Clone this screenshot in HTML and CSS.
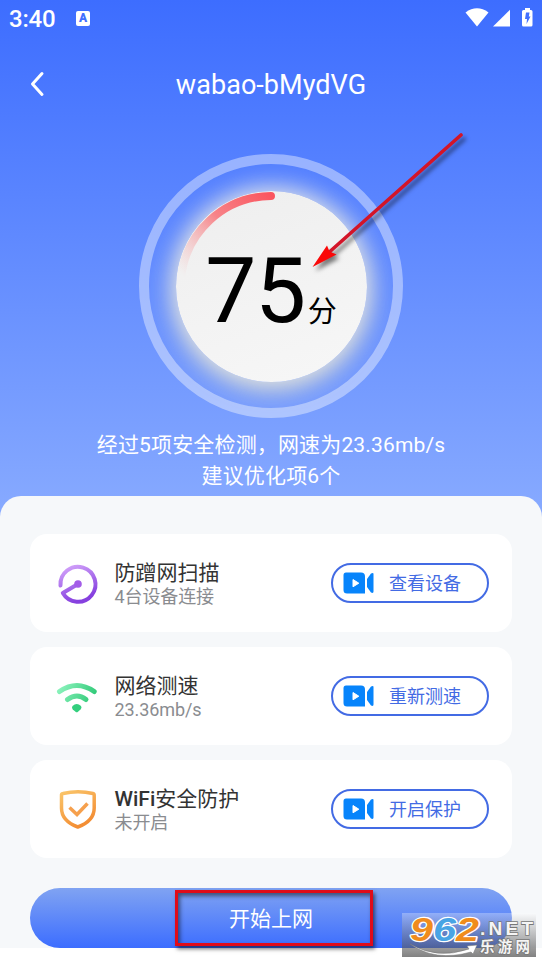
FILE: index.html
```html
<!DOCTYPE html>
<html lang="zh-CN">
<head>
<meta charset="utf-8">
<title>WiFi</title>
<link rel="stylesheet" href="styles.css">
</head>
<body>
<svg class="defs" width="0" height="0">
  <defs>
    <symbol id="video" viewBox="0 0 31 22">
      <path fill="#0784fb" d="M3 .5H18Q22 .5 22 4.5V21.500H4Q.5 21.500 .5 18V3Q.5.5 3 .5Z"/>
      <path fill="#0784fb" d="M24 7 28 1.500Q30.500.3 30.500 2V19.500Q30.500 21.700 28 20.500L24 15Z"/>
      <path fill="#fff" stroke="#fff" stroke-linejoin="round" d="M10 7.500V14.800L15.800 11.200Z"/>
    </symbol>
  </defs>
</svg>
<div class="app">
  <header class="status">
    <span class="clock">3:40</span>
    <span class="badge">A</span>
    <svg class="signals" width="70" height="20" viewBox="0 0 70 20" fill="#fff">
      <path d="M.5 4.500Q12 -3.800 23.500 4.500L12 18.500Z"/>
      <path d="M28 18.500 45 1.700V18.500Z"/>
      <path d="M57 2H60V0H65V2H66Q67.500 2 67.500 3.500V17Q67.500 18.500 66 18.500H58.500Q57 18.500 57 17V3.500Q57 2 58.500 2Z"/>
      <path fill="#416fff" d="M61 4.500H64.500L63.800 8.500H65.500L61.500 16 62 11H60Z"/>
    </svg>
  </header>
  <nav class="nav">
    <svg class="back" width="16" height="26" viewBox="0 0 16 26"><path d="M13 2.500 3.500 13 13 23.500" fill="none" stroke="#fff" stroke-width="3" stroke-linecap="round" stroke-linejoin="round"/></svg>
    <h1 class="title">wabao-bMydVG</h1>
  </nav>
  <section class="gauge">
    <div class="disc">
      <svg class="arc" width="192" height="192" viewBox="0 0 192 192">
        <defs><linearGradient id="red" gradientUnits="userSpaceOnUse" x1="96" y1="5" x2="10" y2="88"><stop offset="0" stop-color="#fa555f"/><stop offset=".45" stop-color="#f78388"/><stop offset="1" stop-color="#f5b7b8" stop-opacity="0"/></linearGradient></defs>
        <path d="M95 5A91 91 0 0 0 5 88" fill="none" stroke="url(#red)" stroke-width="8" stroke-linecap="round"/>
      </svg>
      <div class="score"><span class="num">75</span><span class="unit">分</span></div>
    </div>
    <svg class="pointer" width="170" height="150" viewBox="0 0 170 150">
      <path d="M156 11 21 131" stroke="#d31528" stroke-width="3.600" stroke-linecap="round"/>
      <path fill="#fa0808" d="M7.500 143 22 121.500 24.500 127.500 31.500 130.500Z"/>
    </svg>
  </section>
  <p class="summary">经过5项安全检测，网速为23.36mb/s<br>建议优化项6个</p>
  <main class="sheet">
    <article class="card">
      <svg class="icon" width="44" height="44" viewBox="0 0 44 44"><defs><linearGradient id="purple" x1="0" y1="0" x2=".4" y2="1"><stop stop-color="#d5a6fb"/><stop offset="1" stop-color="#8640df"/></linearGradient></defs>
        <path d="M4.500 23.500A17.500 17.500 0 1 1 6.800 31L22 22" fill="none" stroke="url(#purple)" stroke-width="4" stroke-linecap="round" stroke-linejoin="round"/><circle cx="22" cy="22" r="3.800" fill="#a35ce8"/></svg>
      <div class="text"><h2>防蹭网扫描</h2><p>4台设备连接</p></div>
      <button class="pill"><svg width="31" height="22"><use href="#video"/></svg><span>查看设备</span></button>
    </article>
    <article class="card">
      <svg class="icon" width="44" height="44" viewBox="0 0 44 44"><defs><linearGradient id="green" gradientUnits="userSpaceOnUse" x1="3" y1="12" x2="36" y2="30"><stop stop-color="#8cf3bd"/><stop offset="1" stop-color="#2dc875"/></linearGradient></defs>
        <g fill="none" stroke="url(#green)" stroke-width="5" stroke-linecap="round"><path d="M3.500 16.500Q21 4.500 38.200 16.500"/><path d="M11.500 24.500Q21 17.500 30 24.500"/></g><path fill="#33cf7d" d="M16.500 31Q20.800 27 25 31 26.300 32.500 24.500 34.500L22 36.800Q20.800 37.800 19.500 36.800L16.800 34.500Q15.300 32.500 16.500 31Z"/></svg>
      <div class="text"><h2>网络测速</h2><p>23.36mb/s</p></div>
      <button class="pill"><svg width="31" height="22"><use href="#video"/></svg><span>重新测速</span></button>
    </article>
    <article class="card">
      <svg class="icon" width="44" height="44" viewBox="0 0 44 44"><defs><linearGradient id="orange" x1="0" y1="0" x2=".5" y2="1"><stop stop-color="#fac56a"/><stop offset="1" stop-color="#f38e34"/></linearGradient></defs>
        <path d="M7 5.500Q22 2 37 5.500Q38.300 5.800 38.200 7.500V20Q38.200 33 21.800 39Q5.500 33 5.500 20V7.500Q5.300 5.800 7 5.500Z" fill="none" stroke="url(#orange)" stroke-width="3.500" stroke-linejoin="round"/><path d="M13.500 19.500 21 26.500 31.500 15.500" fill="none" stroke="#f6a04d" stroke-width="3.500"/></svg>
      <div class="text"><h2><b>WiFi</b>安全防护</h2><p>未开启</p></div>
      <button class="pill"><svg width="31" height="22"><use href="#video"/></svg><span>开启保护</span></button>
    </article>
    <button class="start">开始上网</button>
  </main>
</div>
<div class="highlight"></div>
<div class="mark">
  <svg width="134" height="44" viewBox="0 0 134 44">
    <g font-family="Liberation Sans" font-weight="bold" font-style="italic" font-size="34" stroke="#fff" stroke-width="2.500" paint-order="stroke" stroke-linejoin="round">
      <text x="8" y="28" textLength="23" lengthAdjust="spacingAndGlyphs" fill="#f08c1d">9</text>
      <text x="31" y="28" textLength="23" lengthAdjust="spacingAndGlyphs" fill="#48a4e4">6</text>
      <text x="54" y="28" textLength="23" lengthAdjust="spacingAndGlyphs" fill="#f08c1d">2</text>
    </g>
    <path d="M8 31Q35 47 67 36L65 33 75 32 71 41 69 39Q33 49 8 31Z" fill="#fff" stroke="#777" stroke-width=".5"/>
    <g fill="#f5f5f5" stroke="#777" stroke-width="1.600" paint-order="stroke" font-weight="bold">
      <text x="78" y="21.500" font-family="Liberation Sans" font-size="19" textLength="53">.NET</text>
      <text x="78" y="39" font-family="Noto Sans CJK SC" font-size="14.500" textLength="50">乐游网</text>
    </g>
  </svg>
</div>
</body>
</html>
```
FILE: styles.css
```css
* { box-sizing: border-box; margin: 0; padding: 0; }
body { position: relative; width: 542px; height: 963px; overflow: hidden; background: #fff; font-family: Roboto, "Noto Sans CJK SC", sans-serif; color: #fff; }
svg { display: block; flex: none; overflow: visible; }
.defs { position: absolute; }
.app { height: 948px; display: flex; flex-direction: column; background: linear-gradient(#3d6dff 0, #86a9ff 505px); }
.status { height: 38px; flex: none; display: flex; align-items: center; padding: 0 7px 2px 9px; }
.clock { font-size: 24px; font-weight: 500; line-height: 28px; letter-spacing: -.2px; width: 67px; padding-top: 2px; }
.badge { width: 14px; height: 15px; border-radius: 2px; background: #fff; color: #416fff; font-size: 12px; font-weight: 900; line-height: 15px; text-align: center; }
.signals { margin-left: auto; }
.nav { height: 92px; flex: none; display: grid; grid-template-columns: 60px 1fr 60px; align-items: center; }
.back { margin-left: 29px; }
.title { text-align: center; font-size: 27px; font-weight: 400; line-height: 32px; letter-spacing: .05px; padding-top: 2px; }
.gauge { position: relative; width: 264px; height: 264px; flex: none; margin: 24px auto 0; border: 10px solid rgba(255,255,255,.4); border-radius: 50%; display: grid; place-items: center; }
.disc { position: relative; width: 191px; height: 191px; border-radius: 50%; background: linear-gradient(160deg, #eee, #f7f7f7); box-shadow: 0 -2px 24px 2px rgba(255,255,255,.6), 0 5px 24px 2px rgba(245,230,170,.65); }
.arc { position: absolute; left: 0; top: 0; }
.score { display: flex; align-items: baseline; justify-content: center; color: #000; padding: 46px 0 0 0; }
.num { font-size: 91px; line-height: 108px; letter-spacing: -1.5px; }
.unit { font-size: 29px; margin-left: 3px; }
.pointer { position: absolute; left: 156px; top: -40px; filter: drop-shadow(3px 4px 2px rgba(0,0,0,.5)); }
.summary { flex: none; margin-top: 12px; height: 66px; text-align: center; font-size: 21px; line-height: 31px; letter-spacing: .15px; }
.sheet { flex: 1; display: flex; flex-direction: column; gap: 15px; padding: 38px 30px 0; background: #f6f8fa; border-radius: 21px 21px 0 0; color: #333; }
.card { height: 98px; flex: none; display: flex; align-items: center; padding: 0 23px 0 26px; background: #fff; border-radius: 17px; }
.icon { margin-top: 1px; }
.text { flex: 1; padding: 3px 0 0 14.500px; }
.text h2 { font-size: 21px; font-weight: 400; line-height: 25px; }
.text b { font-weight: 500; }
.text p { font-size: 18px; line-height: 22px; letter-spacing: -.1px; color: #8a8c90; }
.pill { width: 158px; height: 40px; display: flex; align-items: center; padding-left: 10px; gap: 15px; border: 2px solid #436be4; border-radius: 20px; background: #fff; color: #436be4; font: 18px/24px Roboto, "Noto Sans CJK SC", sans-serif; }
.pill span { padding-top: 2px; }
.start { flex: none; height: 60px; margin-top: 15px; padding-top: 2px; border: 0; border-radius: 30px; background: linear-gradient(#80a3f2, #3c6dff); color: #fff; font: 21px/30px Roboto, "Noto Sans CJK SC", sans-serif; }
.highlight { position: absolute; left: 175px; top: 890px; width: 198px; height: 56px; border: 3.500px solid #e00b19; box-shadow: 2px 3px 4px rgba(0,0,0,.55), inset 2px 3px 4px rgba(0,0,0,.5); }
.mark { position: absolute; left: 402px; top: 913px; width: 134px; height: 44px; background: linear-gradient(rgba(255,255,255,.3), rgba(70,70,70,.68)); }
```
